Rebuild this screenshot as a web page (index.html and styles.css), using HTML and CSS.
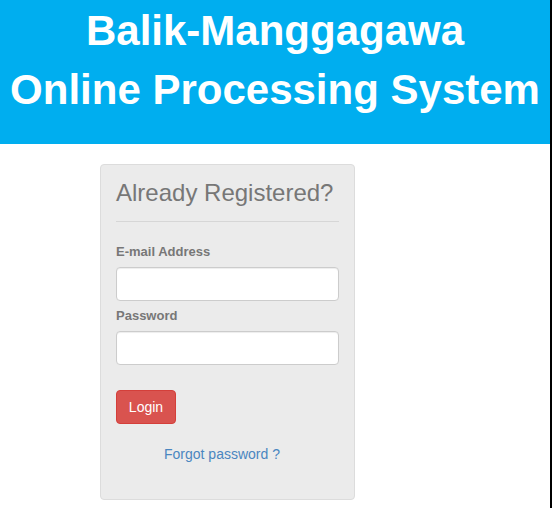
FILE: index.html
```html
<!DOCTYPE html>
<html>
<head>
<meta charset="utf-8">
<link rel="stylesheet" href="styles.css">
</head>
<body>
<header class="banner">
  <div class="banner-line">Balik-Manggagawa</div>
  <div class="banner-line">Online Processing System</div>
</header>
<main class="content">
  <form class="panel">
    <h3 class="panel-title">Already Registered?</h3>
    <hr class="divider">
    <label class="field-label">E-mail Address</label>
    <input class="field-input" type="text">
    <label class="field-label field-label-second">Password</label>
    <input class="field-input" type="password">
    <button class="btn-login" type="button">Login</button>
    <p class="forgot"><a class="forgot-link" href="#">Forgot password ?</a></p>
  </form>
</main>
</body>
</html>
```

FILE: styles.css
```css
html {
  background: #000;
}
body {
  margin: 0;
  width: 550px;
  min-height: 100vh;
  background: #fff;
  font-family: "Liberation Sans", Arial, sans-serif;
}
.banner {
  background: #00aeef;
  color: #fff;
  text-align: center;
  height: 144px;
  box-sizing: border-box;
  padding-top: 1px;
}
.banner-line {
  font-size: 42px;
  font-weight: bold;
  line-height: 59px;
}
.content {
  padding-top: 20px;
  padding-left: 100px;
}
.panel {
  width: 255px;
  box-sizing: border-box;
  background: #ebebeb;
  border: 1px solid #dcdcdc;
  border-radius: 4px;
  padding: 15px 15px 35px 15px;
  display: flex;
  flex-direction: column;
  align-items: flex-start;
}
.panel-title {
  margin: 0;
  font-size: 24px;
  font-weight: normal;
  line-height: 26.4px;
  color: #777;
}
.divider {
  align-self: stretch;
  margin: 15px 0 0 0;
  border: 0;
  border-top: 1px solid #d6d6d6;
  height: 0;
}
.field-label {
  margin-top: 21px;
  font-size: 13px;
  font-weight: bold;
  line-height: 18.6px;
  color: #777;
}
.field-label-second {
  margin-top: 6px;
}
.field-input {
  align-self: stretch;
  margin: 5px 0 0 0;
  height: 34px;
  box-sizing: border-box;
  border: 1px solid #ccc;
  border-radius: 4px;
  background: #fff;
  box-shadow: inset 0 1px 1px rgba(0,0,0,0.075);
}
.btn-login {
  margin-top: 25px;
  width: 60px;
  height: 34px;
  box-sizing: border-box;
  background: #d9534f;
  border: 1px solid #d43f3a;
  border-radius: 4px;
  color: #fff;
  font-family: "Liberation Sans", Arial, sans-serif;
  font-size: 14px;
  padding: 0;
}
.forgot {
  align-self: stretch;
  margin: 20px 0 0 0;
  text-align: center;
  line-height: 20px;
  font-size: 14px;
  padding-right: 11px;
}
.forgot-link {
  color: #4a86c0;
  text-decoration: none;
}
```
